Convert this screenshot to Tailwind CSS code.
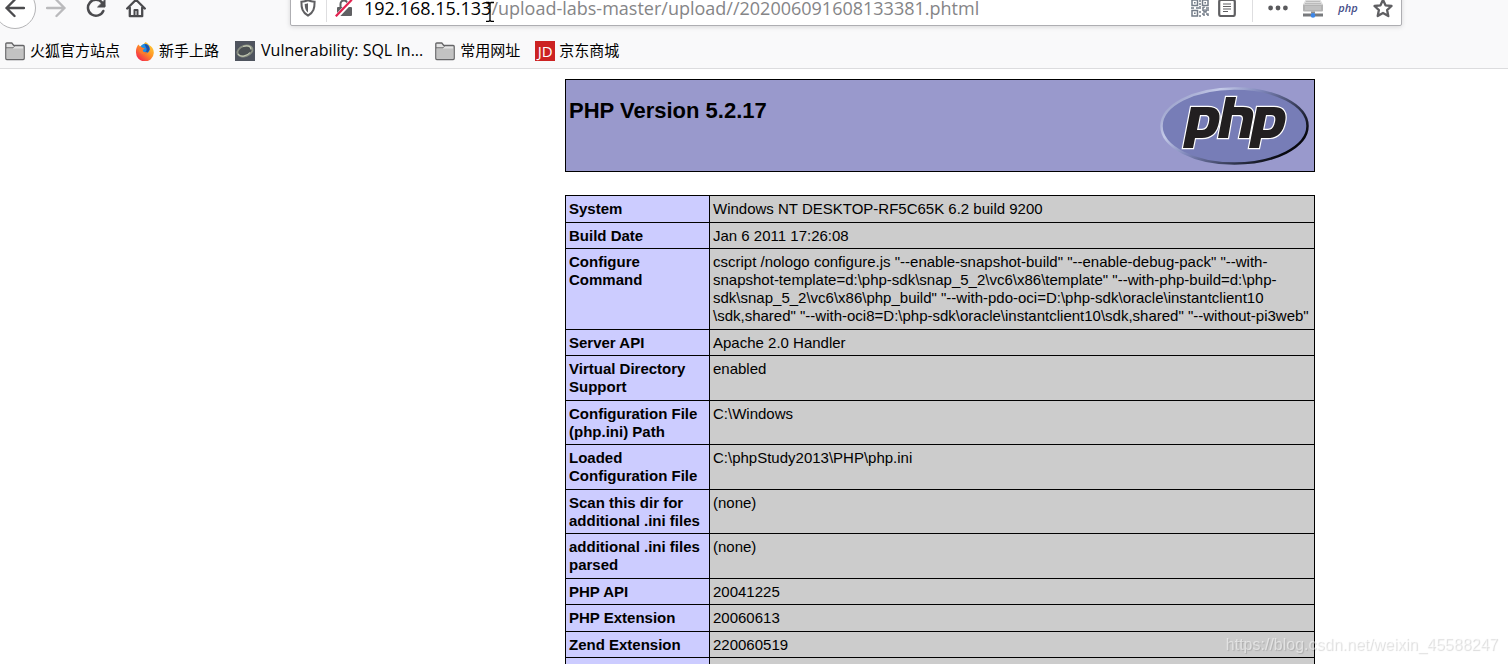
<!DOCTYPE html>
<html lang="zh-CN">
<head>
<meta charset="utf-8">
<title>phpinfo()</title>
<script src="https://cdn.jsdelivr.net/npm/@tailwindcss/browser@4"></script>
</head>
<body class="h-screen overflow-hidden bg-white font-['Liberation_Sans',Arial,sans-serif] text-black">
<header class="overflow-hidden border-b border-[#dcdcde] bg-[#f9f9fa] font-['Open_Sans','Noto_Sans_CJK_SC',sans-serif]">
  <nav class="-mt-[18px] flex h-[52px] items-center" aria-label="Navigation">
    <button aria-label="Back" class="-ml-[6px] flex size-[42px] shrink-0 items-center justify-center rounded-full border border-[#b4b4b6] bg-white">
      <svg class="size-5" viewBox="0 0 20 20" fill="none" stroke="#4b4b4e" stroke-width="2.4" stroke-linecap="round" stroke-linejoin="round"><path d="M19 10H1.5M9.5 2 1.5 10l8 8"/></svg>
    </button>
    <button aria-label="Forward" class="ml-[10px] shrink-0">
      <svg class="size-5" viewBox="0 0 20 20" fill="none" stroke="#bababc" stroke-width="2.4" stroke-linecap="round" stroke-linejoin="round"><path d="M1 10h17.500M10.500 2l8 8-8 8"/></svg>
    </button>
    <button aria-label="Reload" class="ml-5 shrink-0">
      <svg class="size-5" viewBox="0 0 20 20" fill="none" stroke="#4b4b4e" stroke-width="2.500" stroke-linecap="round" stroke-linejoin="round"><path d="M17.300 13A8 8 0 1 1 16 4.500l2 3"/><path d="M19 2v7h-7z" fill="#4b4b4e" stroke-width="1"/></svg>
    </button>
    <button aria-label="Home" class="ml-5 shrink-0">
      <svg class="size-5" viewBox="0 0 20 20" fill="none" stroke="#4b4b4e" stroke-width="2.300" stroke-linecap="round" stroke-linejoin="round"><path d="M1.200 10.500 10 1.800l8.800 8.700M3.800 9.500v8.700h12.400V9.500"/><path d="M8.500 18v-6h3v6" stroke-width="2"/></svg>
    </button>
    <div class="ml-36 mr-[106px] flex h-9 min-w-0 flex-1 items-center rounded-xs border border-[#aeaeb2] bg-white pl-2 pr-2 shadow-[0_1px_5px_rgba(0,0,0,0.14)]">
      <svg class="size-[18px] shrink-0" viewBox="0 0 18 18"><path d="M9 1.200c2.500 1 4.300 1.300 6.600 1.500 0 6.500-.9 10.800-6.600 14C3.300 13.500 2.400 9.200 2.400 2.700 4.700 2.500 6.500 2.200 9 1.200z" fill="none" stroke="#606063" stroke-width="2"/><path d="M9 4.300c-1 .4-2 .7-3.300.8.100 4 .8 6.700 3.300 8.500z" fill="#606063"/></svg>
      <span class="ml-[9px] h-7 w-px shrink-0 bg-[#dedee0]"></span>
      <svg class="ml-2 size-[18px] shrink-0" viewBox="0 0 18 18"><path d="M5.500 8V5a3.500 3.500 0 0 1 7 0v3" fill="none" stroke="#606063" stroke-width="2"/><rect x="2" y="8" width="15" height="9" rx="1" fill="#606063"/><path d="M1.800 17.500 17.500.8" stroke="#fff" stroke-width="4.500"/><path d="M.8 17.300 16.800.8" stroke="#e3224f" stroke-width="2.200"/></svg>
      <div role="textbox" contenteditable="true" spellcheck="false" aria-label="Address" class="ml-[11px] min-w-0 flex-1 whitespace-nowrap text-[18px] leading-4 text-black outline-none">192.168.15.133<span class="text-[#858587]">/upload-labs-master/upload//202006091608133381.phtml</span></div>
      <button aria-label="QR code" class="shrink-0">
        <svg class="size-[18px]" viewBox="0 0 18 18" fill="none" stroke="#737c88" stroke-width="1.500"><path d="M1 1h5.500v5.500H1zM11.500 1H17v5.500h-5.500zM1 11.500h5.500V17H1z"/><path d="M3 3.800h1.600M13.400 3.800H15M3 14.200h1.600M9 0v3M8 5h2M9 7v3M0 9h3M5 9h3M11 9h2M15 9h3M9 12v2M9 16v2M11 11h2v2h2v-2h3M11 15h2v2M15 15h2v2M13 7.500V9"/></svg>
      </button>
      <button aria-label="Reader view" class="ml-[9px] shrink-0">
        <svg class="size-[18px]" viewBox="0 0 18 18" fill="none" stroke="#5f5f62"><rect x="1.200" y="1" width="15.600" height="16" rx="1.800" stroke-width="2.200"/><path d="M5 5h8M5 7.500h8M5 10h8M5 12.500h5" stroke-width="1.200"/></svg>
      </button>
      <span class="ml-4 h-7 w-px shrink-0 bg-[#dedee0]"></span>
      <button aria-label="Page actions" class="ml-[15px] shrink-0">
        <svg class="size-5" viewBox="0 0 20 20" fill="#5a5a5d"><circle cx="2.600" cy="10" r="2.400"/><circle cx="10" cy="10" r="2.400"/><circle cx="17.400" cy="10" r="2.400"/></svg>
      </button>
      <button aria-label="Proxy" class="ml-[15px] shrink-0">
        <svg class="size-5" viewBox="0 0 20 20"><path d="M3.500 0h13L20 6.500H0z" fill="#dcdcdc"/><path d="M3 3.500h14M2 5.500h16" stroke="#bcbcbc"/><path d="M0 6.500h20v6a1 1 0 0 1-1 1H1a1 1 0 0 1-1-1z" fill="#b3b3b3"/><path d="M2 9h16M2 11h16" stroke="#d0d0d0"/><path d="M0 17h20" stroke="#77797c" stroke-width="3"/><rect x="8" y="13.500" width="4" height="2" fill="#8b8d90"/><circle cx="10" cy="17.400" r="2.300" fill="#3c86e8"/></svg>
      </button>
      <button aria-label="PHP" class="ml-[15px] w-5 shrink-0 text-center font-['Open_Sans',sans-serif] text-[11px] font-semibold italic leading-4 text-[#454c87]">php</button>
      <button aria-label="Bookmark" class="ml-[15px] shrink-0">
        <svg class="size-5" viewBox="0 0 20 20" fill="none" stroke="#5f5f62" stroke-width="2.300" stroke-linejoin="round"><path d="m10 1.800 2.500 5.500 6 .7-4.400 4.100 1.200 5.900-5.300-3-5.300 3 1.200-5.900L1.500 8l6-.7z"/></svg>
      </button>
    </div>
  </nav>
  <nav class="flex h-[34px] items-center whitespace-nowrap pl-[5px] text-[15px] leading-5" aria-label="Bookmarks">
    <a href="#" class="flex items-center gap-[5px]">
      <svg class="size-5" viewBox="0 0 20 20"><path d="M.8 17.500V3a1 1 0 0 1 1-1h5l2 2.500h9.400a1 1 0 0 1 1 1v12a1 1 0 0 1-1 1H1.800a1 1 0 0 1-1-1z" fill="#e4e4e4" stroke="#656567" stroke-width="1.300"/><path d="M2 7.500h16V17H2z" fill="#c2c2c2"/><path d="M1 6.800h7l1.500-1.500" fill="none" stroke="#656567"/></svg>
      <span class="pb-0.5">火狐官方站点</span>
    </a>
    <a href="#" class="ml-[15px] flex items-center gap-1">
      <svg class="size-5" viewBox="0 0 20 20"><defs><linearGradient id="fox" x1="1" y1="0" x2=".2" y2="1"><stop offset="0" stop-color="#ffe23b"/><stop offset=".5" stop-color="#ff9426"/><stop offset="1" stop-color="#f4204f"/></linearGradient></defs><path d="M10.500 1c2 1 2.500 2 3.500 3 3 1.500 5 4 4.800 8A8.800 8.800 0 0 1 1 11C.8 8 2 5 3.500 3.500L5 5.500C7 4 9 3.500 10.500 1z" fill="url(#fox)"/><path d="M6 5c1-2 4-3.200 6.500-1.500 2 1.500 3 4 1.800 6.500-1 2-3.500 3-5.500 2.200S5 9 6 5z" fill="#1d8fe8"/><path d="M9.500 3.200c3-.5 5 2 5 5.300-1 2.500-3 4-5.500 3.200 2-.7 3-1.700 2.500-4.200z" fill="#2150a8"/><path d="M4 6c1.500-.8 3 0 3.600.8l2.400.5-2.200 1.600c0 2 2 2.800 4.500 1.800-1 2.600-4.500 3.300-6.500 1.600S3.300 8 4 6z" fill="#fc7a2c"/></svg>
      <span class="pb-0.5">新手上路</span>
    </a>
    <a href="#" class="ml-4 flex items-center gap-[6px]">
      <svg class="size-5" viewBox="0 0 20 20"><rect width="20" height="20" fill="#4f545e"/><ellipse cx="10" cy="10" rx="7.800" ry="5.200" transform="rotate(-20 10 10)" fill="#4a4f52" stroke="#878d80" stroke-width="1.800"/><path d="M3 13c2 3.500 9 2.500 12-1.500M8 5.500c4-1.500 8-.5 8 3" fill="none" stroke="#c3c9b4" stroke-width="1.200"/></svg>
      <span class="pb-0.5 text-[16px]">Vulnerability: SQL In...</span>
    </a>
    <a href="#" class="ml-3 flex items-center gap-[5px]">
      <svg class="size-5" viewBox="0 0 20 20"><path d="M.8 17.500V3a1 1 0 0 1 1-1h5l2 2.500h9.400a1 1 0 0 1 1 1v12a1 1 0 0 1-1 1H1.800a1 1 0 0 1-1-1z" fill="#e4e4e4" stroke="#656567" stroke-width="1.300"/><path d="M2 7.500h16V17H2z" fill="#c2c2c2"/><path d="M1 6.800h7l1.500-1.500" fill="none" stroke="#656567"/></svg>
      <span class="pb-0.5">常用网址</span>
    </a>
    <a href="#" class="ml-[15px] flex items-center gap-1">
      <span class="flex size-5 items-center justify-center bg-[#cc2222] text-[15px] font-medium leading-5 text-white">JD</span>
      <span class="pb-0.5">京东商城</span>
    </a>
  </nav>
</header>
<svg class="absolute left-[485px] top-0 h-[22px] w-[10px]" viewBox="0 0 10 22" fill="none" stroke="#000" stroke-width="1.300" aria-hidden="true"><path d="M1 2.500h3l1 1 1-1h3M5 3v18M1 21.300h3l1-1 1 1h3"/></svg>

<main class="pl-[565px] pt-[10px]">
  <div class="flex h-[93px] w-[750px] items-start justify-between border border-black bg-[#9999cc] pl-[3px] pr-[5px]">
    <h1 class="mt-[17px] text-[22px] font-bold leading-7">PHP Version 5.2.17</h1>
    <svg class="mt-[7px] h-[78px] w-[149px]" viewBox="0 0 149 78" aria-label="PHP logo">
      <defs><linearGradient id="rim" x1="0" y1="0" x2="1" y2=".6"><stop offset="0" stop-color="#8187b8"/><stop offset=".3" stop-color="#c4cae8"/><stop offset=".52" stop-color="#7c84b8"/><stop offset=".8" stop-color="#333852"/><stop offset="1" stop-color="#08090f"/></linearGradient></defs>
      <ellipse cx="74.500" cy="39" rx="73" ry="37.500" fill="#777db7" stroke="url(#rim)" stroke-width="2.500"/>
      <g fill="#221f20" fill-rule="evenodd" stroke="#fff" stroke-width="2.400" paint-order="stroke" stroke-linejoin="miter">
        <path d="M31 20H48C58 20 61 26 59 35C57 46 51 51 42 51H35L33 61H23ZM40 28 37 43H42C46 43 48 40 49 35C50 30 49 28 45 28Z"/>
        <path d="M97 20H114C124 20 127 26 125 35C123 46 117 51 108 51H101L99 61H89ZM106 28 103 43H108C112 43 114 40 115 35C116 30 115 28 111 28Z"/>
        <path d="M66 10H76L74 20H83C92 20 94 24 93 30L89 51H79L83 32C83 29 82 28 79 28H72L68 51H58Z"/>
      </g>
    </svg>
  </div>
  <table class="mt-[23px] w-[750px] table-fixed border-collapse text-left text-[15px] leading-[18px] [&_td]:whitespace-nowrap [&_td]:border [&_td]:border-black [&_td]:bg-[#cccccc] [&_td]:px-[3px] [&_td]:pt-1 [&_td]:align-top [&_th]:whitespace-nowrap [&_th]:border [&_th]:border-black [&_th]:bg-[#ccccff] [&_th]:px-[3px] [&_th]:pt-1 [&_th]:align-top">
    <colgroup><col class="w-[144px]"><col></colgroup>
    <tbody>
      <tr class="h-[27px]"><th scope="row">System</th><td>Windows NT DESKTOP-RF5C65K 6.2 build 9200</td></tr>
      <tr class="h-[26px]"><th scope="row">Build Date</th><td>Jan 6 2011 17:26:08</td></tr>
      <tr class="h-[81px]"><th scope="row">Configure<br>Command</th><td>cscript /nologo configure.js "--enable-snapshot-build" "--enable-debug-pack" "--with-<br>snapshot-template=d:\php-sdk\snap_5_2\vc6\x86\template" "--with-php-build=d:\php-<br>sdk\snap_5_2\vc6\x86\php_build" "--with-pdo-oci=D:\php-sdk\oracle\instantclient10<br>\sdk,shared" "--with-oci8=D:\php-sdk\oracle\instantclient10\sdk,shared" "--without-pi3web"</td></tr>
      <tr class="h-[26px]"><th scope="row">Server API</th><td>Apache 2.0 Handler</td></tr>
      <tr class="h-[45px]"><th scope="row">Virtual Directory<br>Support</th><td>enabled</td></tr>
      <tr class="h-[44px]"><th scope="row">Configuration File<br>(php.ini) Path</th><td>C:\Windows</td></tr>
      <tr class="h-[45px]"><th scope="row">Loaded<br>Configuration File</th><td>C:\phpStudy2013\PHP\php.ini</td></tr>
      <tr class="h-[44px]"><th scope="row">Scan this dir for<br>additional .ini files</th><td>(none)</td></tr>
      <tr class="h-[45px]"><th scope="row">additional .ini files<br>parsed</th><td>(none)</td></tr>
      <tr class="h-[26px]"><th scope="row">PHP API</th><td>20041225</td></tr>
      <tr class="h-[27px]"><th scope="row">PHP Extension</th><td>20060613</td></tr>
      <tr class="h-[26px]"><th scope="row">Zend Extension</th><td>220060519</td></tr>
      <tr class="h-[26px]"><th scope="row"></th><td></td></tr>
    </tbody>
  </table>
</main>
<p class="fixed bottom-[9px] right-[10px] text-[16px] leading-5 text-white/50 [text-shadow:1px_1px_1px_rgba(0,0,0,0.15)]">https://blog.csdn.net/weixin_45588247</p>
</body>
</html>
